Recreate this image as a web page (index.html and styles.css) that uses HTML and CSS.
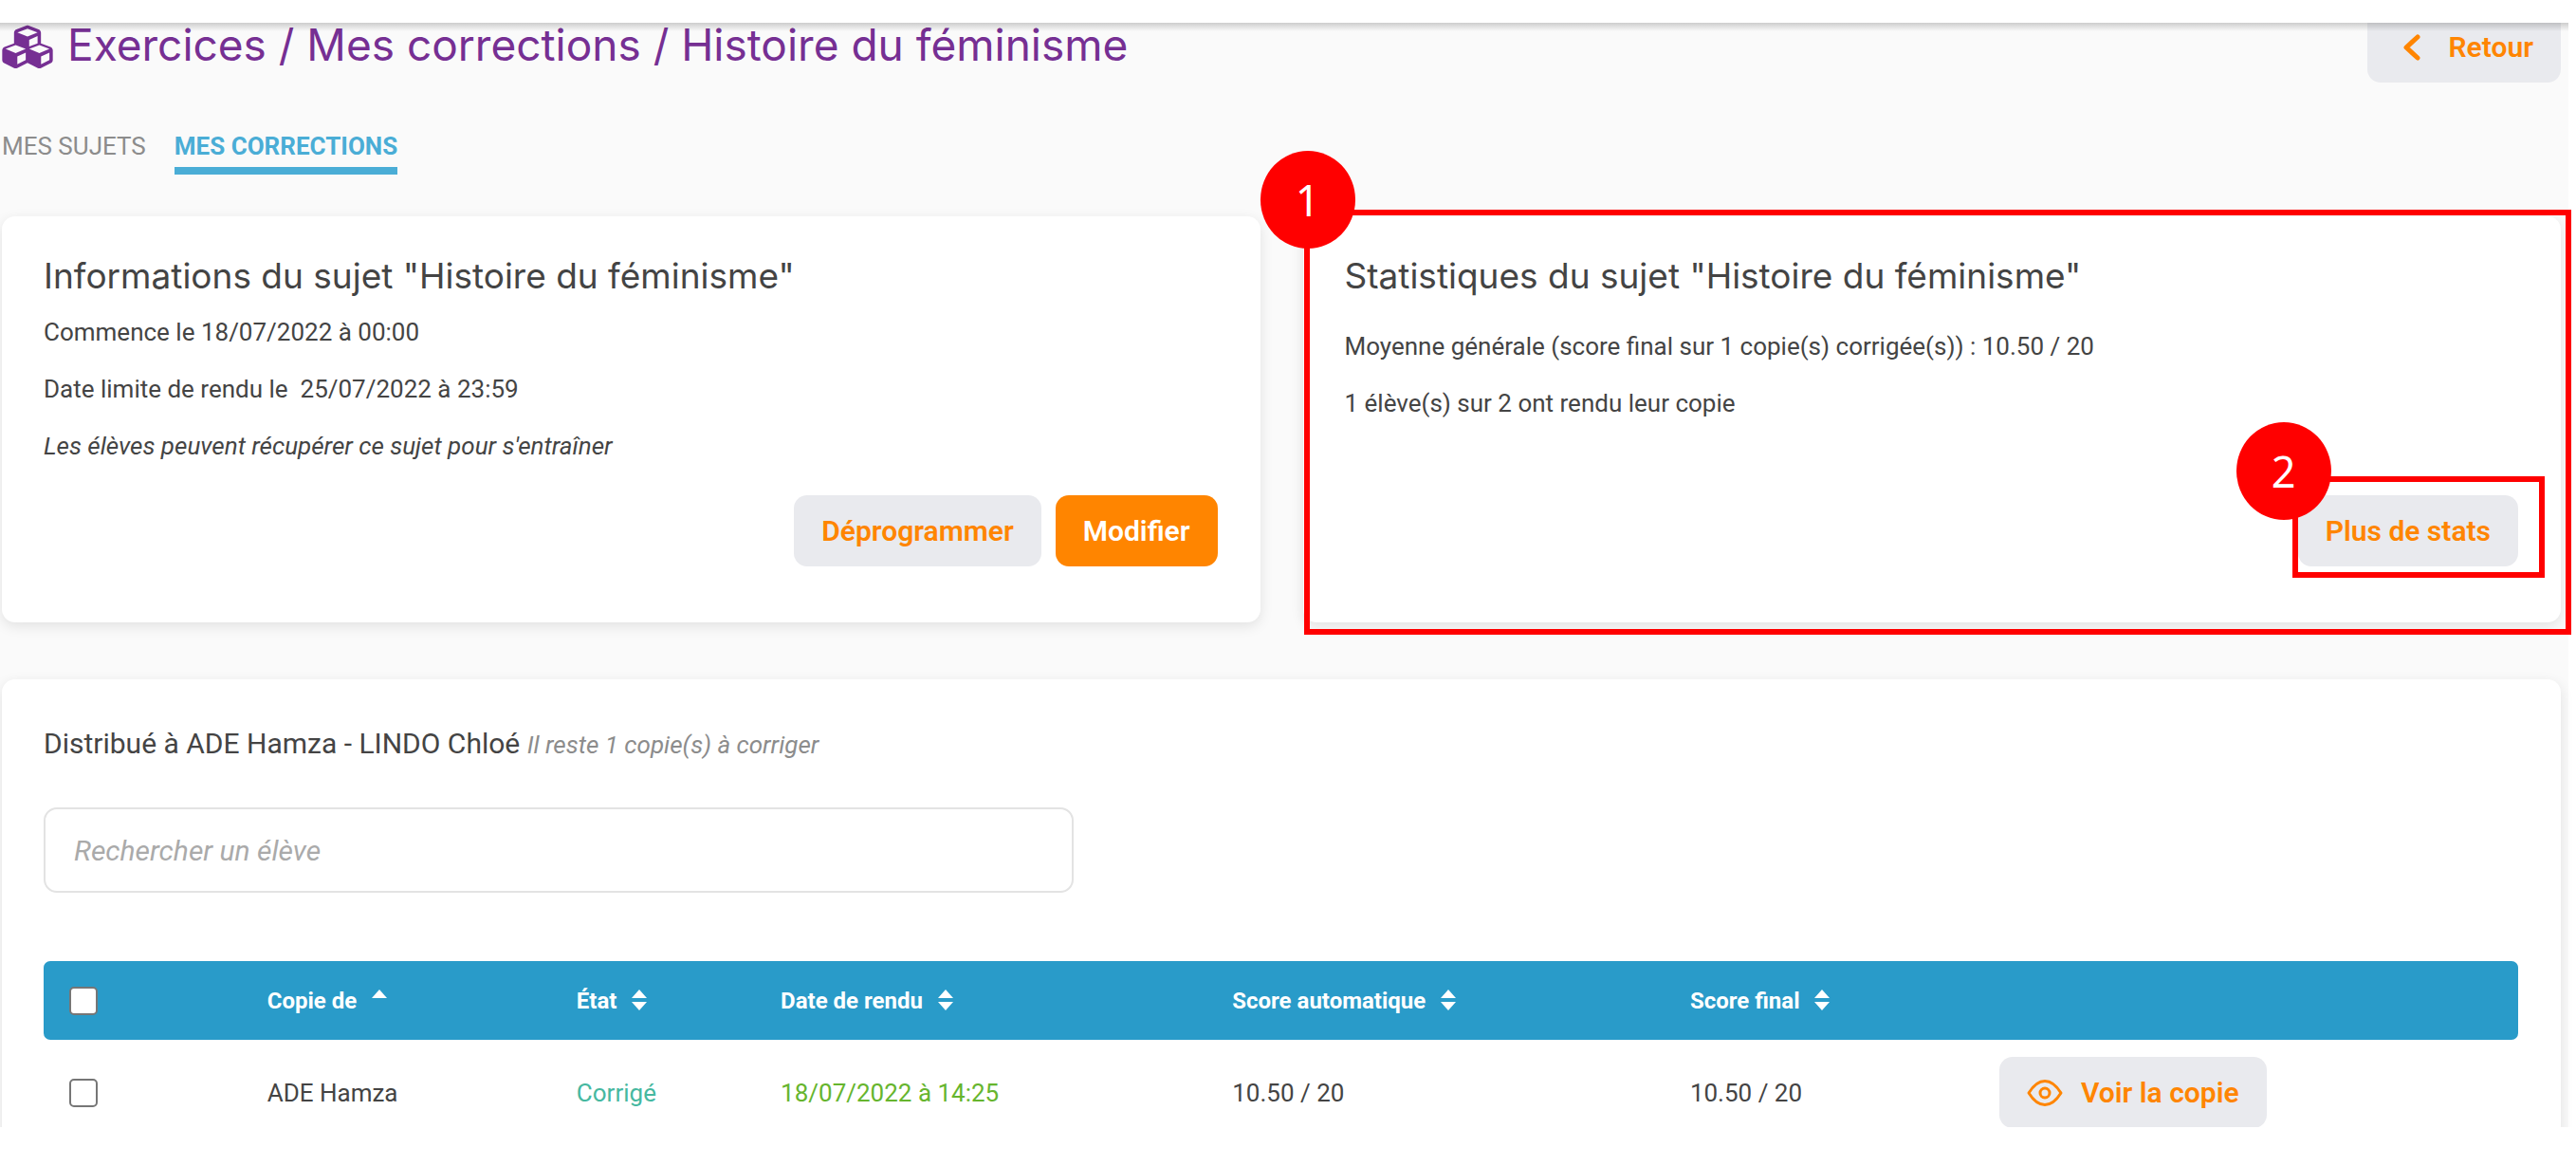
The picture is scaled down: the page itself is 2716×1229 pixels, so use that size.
FILE: index.html
```
<!DOCTYPE html>
<html lang="fr">
<head>
<meta charset="utf-8">
<meta name="viewport" content="width=device-width, initial-scale=1">
<title>Exercices - Mes corrections</title>
<link rel="stylesheet" href="styles.css">
</head>
<body>
<svg width="0" height="0" class="sprite" aria-hidden="true">
  <symbol id="sort-both" viewBox="0 0 16 22"><path d="M8 0L16 9H0zM0 13H16L8 22z" fill="currentColor"/></symbol>
  <symbol id="sort-up" viewBox="0 0 16 22"><path d="M8 0L16 9H0z" fill="currentColor"/></symbol>
</svg>
<header class="topbar"></header>
<div class="viewport">
  <main class="page">
    <div class="page-head">
      <svg class="cubes" viewBox="0 0 512 480" aria-hidden="true">
        <path fill="currentColor" d="M488.600 234.200L392 198V90.500c0-15-9.300-28.400-23.400-33.700l-100-37.500c-8.100-3.100-17.100-3.100-25.300 0l-100 37.500c-14.100 5.300-23.400 18.700-23.400 33.700V198l-96.600 36.200C9.300 239.500 0 252.900 0 267.900V366c0 13.600 7.700 26.100 19.900 32.200l100 50c10.100 5.100 22.100 5.100 32.200 0l103.900-52 103.900 52c10.100 5.100 22.100 5.100 32.200 0l100-50c12.200-6.100 19.900-18.600 19.900-32.200v-98.100c0-15-9.300-28.400-23.400-33.700zM358 198.800l-85 31.900v-68.200l85-37v73.300zM154 88.100l102-38.200 102 38.200v.6l-102 41.400-102-41.400v-.6zm84 279.100l-85 42.500v-79.100l85-38.800v75.400zm0-112l-102 41.400-102-41.400v-.6l102-38.200 102 38.200v.6zm240 112l-85 42.500v-79.100l85-38.800v75.400zm0-112l-102 41.400-102-41.400v-.6l102-38.200 102 38.200v.6z"/>
      </svg>
      <h1 class="page-title">Exercices / Mes corrections / Histoire du féminisme</h1>
      <button type="button" class="btn btn-back">
        <svg class="chevron" viewBox="0 0 18 28" aria-hidden="true"><path d="M15 3L3 14L15 25" fill="none" stroke="currentColor" stroke-width="5" stroke-linecap="round" stroke-linejoin="round"/></svg>
        Retour
      </button>
    </div>

    <nav class="tabs">
      <a href="#sujets" class="tab">MES SUJETS</a>
      <a href="#corrections" class="tab tab-active" aria-current="page">MES CORRECTIONS</a>
    </nav>

    <div class="cards">
      <section class="card">
        <h2 class="card-title">Informations du sujet "Histoire du féminisme"</h2>
        <p class="line">Commence le 18/07/2022 à 00:00</p>
        <p class="line">Date limite de rendu le &nbsp;25/07/2022 à 23:59</p>
        <p class="line"><em>Les élèves peuvent récupérer ce sujet pour s'entraîner</em></p>
        <div class="actions">
          <button type="button" class="btn">Déprogrammer</button>
          <button type="button" class="btn btn-primary">Modifier</button>
        </div>
      </section>
      <section class="card">
        <h2 class="card-title card-title-spaced">Statistiques du sujet "Histoire du féminisme"</h2>
        <p class="line">Moyenne générale (score final sur 1 copie(s) corrigée(s)) : 10.50 / 20</p>
        <p class="line">1 élève(s) sur 2 ont rendu leur copie</p>
        <div class="actions">
          <div class="target">
            <button type="button" class="btn">Plus de stats</button>
            <span class="frame frame-button"></span>
            <span class="step step-button">2</span>
          </div>
        </div>
        <span class="frame frame-card"></span>
        <span class="step step-card">1</span>
      </section>
    </div>

    <section class="card card-list">
      <p class="recipients">Distribué à ADE Hamza - LINDO Chloé <em class="remaining">Il reste 1 copie(s) à corriger</em></p>
      <input type="search" class="search" placeholder="Rechercher un élève" aria-label="Rechercher un élève">
      <table class="copies">
        <colgroup>
          <col class="col-check"><col class="col-name"><col class="col-state"><col class="col-date"><col class="col-auto"><col class="col-final"><col>
        </colgroup>
        <thead>
          <tr>
            <th><input type="checkbox" class="check" aria-label="Tout sélectionner"></th>
            <th>Copie de <svg class="sort"><use href="#sort-up"/></svg></th>
            <th>État <svg class="sort"><use href="#sort-both"/></svg></th>
            <th>Date de rendu <svg class="sort"><use href="#sort-both"/></svg></th>
            <th>Score automatique <svg class="sort"><use href="#sort-both"/></svg></th>
            <th>Score final <svg class="sort"><use href="#sort-both"/></svg></th>
            <th></th>
          </tr>
        </thead>
        <tbody>
          <tr>
            <td><input type="checkbox" class="check" aria-label="Sélectionner ADE Hamza"></td>
            <td>ADE Hamza</td>
            <td class="state">Corrigé</td>
            <td class="date">18/07/2022 à 14:25</td>
            <td>10.50 / 20</td>
            <td>10.50 / 20</td>
            <td>
              <button type="button" class="btn btn-view">
                <svg class="eye" viewBox="0 0 38 30" aria-hidden="true"><g fill="none" stroke="currentColor" stroke-width="3"><path d="M2 15C7 7 13 2.500 19 2.500S31 7 36 15C31 23 25 27.500 19 27.500S7 23 2 15z" stroke-linejoin="round"/><circle cx="19" cy="15" r="5"/></g></svg>
                Voir la copie
              </button>
            </td>
          </tr>
        </tbody>
      </table>
    </section>
  </main>
</div>
<footer class="bottombar"></footer>
</body>
</html>
```
FILE: styles.css
```
* { box-sizing: border-box; }

body {
  margin: 0;
  height: 100vh;
  display: flex;
  flex-direction: column;
  background: #fff;
  color: #444;
  font: 26px/30px Roboto, sans-serif;
  overflow: hidden;
}

.sprite { position: absolute; }

.topbar {
  flex: none;
  height: 24px;
  margin-right: 8px;
  position: relative;
  z-index: 1;
}

/* shade cast by the top bar over the scrolled content */
.topbar::after {
  content: "";
  position: absolute;
  top: 100%;
  left: 0;
  right: 0;
  height: 9px;
  background: linear-gradient(rgba(0, 0, 0, .18), rgba(0, 0, 0, 0));
}

.bottombar { flex: none; height: 41px; }

.viewport { flex: 1; min-height: 0; overflow: hidden; }

/* the content is scrolled slightly under the top bar */
.page {
  margin: -12px 8px 0 0;
  padding: 0 8px 0 2px;
  background: #fafafa;
}

.page-head {
  display: flex;
  align-items: center;
  height: 75px;
}

.cubes { width: 54px; height: 50px; color: #762f93; flex: none; }

.page-title {
  margin: 0 auto 0 15px;
  padding-bottom: 6px;
  color: #762f93;
  font: 400 46px/50px Inter, sans-serif;
  white-space: nowrap;
}

.btn {
  display: inline-flex;
  align-items: center;
  justify-content: center;
  height: 75px;
  padding: 0 29px;
  border: 0;
  border-radius: 14px;
  background: #e9eaee;
  color: #ff8500;
  font: 600 30px/36px Roboto, sans-serif;
  white-space: nowrap;
  cursor: pointer;
}

.btn-primary { background: #ff8500; color: #fff; }

.btn-back { gap: 30px; padding-left: 38px; }

.chevron { width: 18px; height: 28px; }

.tabs {
  display: flex;
  gap: 30px;
  margin-top: 37px;
}

.tab {
  padding: 15px 0 7px;
  border-bottom: 8px solid transparent;
  color: #8c8c8c;
  text-decoration: none;
}

.tab-active {
  border-color: #4aadd6;
  color: #4aadd6;
  font-weight: 700;
}

.cards {
  display: grid;
  grid-template-columns: 1fr 1fr;
  gap: 45px;
  margin: 44px 0 60px;
}

.card {
  position: relative;
  display: flex;
  flex-direction: column;
  padding: 42px 45px 59px 44px;
  border-radius: 14px;
  background: #fff;
  box-shadow: 0 4px 14px rgba(0, 0, 0, .1);
}

.card-title {
  margin: 0 0 23px;
  font: 400 37px/42px Inter, sans-serif;
}

.card-title-spaced { margin-bottom: 38px; }

.line { margin: 0 0 30px; }

.actions {
  display: flex;
  justify-content: flex-end;
  gap: 15px;
  margin-top: auto;
  padding-top: 7px;
}

.target { position: relative; }

/* numbered callouts drawn over the interface */
.frame {
  position: absolute;
  border: 6px solid #f00;
  pointer-events: none;
}

.frame-card { inset: -7px -11px -13px 1px; }
.frame-button { inset: -20px -28px -12px -6px; }

.step {
  position: absolute;
  display: flex;
  align-items: center;
  justify-content: center;
  width: 100px;
  height: 103px;
  border-radius: 50%;
  background: #f00;
  color: #fff;
  font: 400 45px/60px "Noto Sans", sans-serif;
}

.step-card { top: -69px; left: -45px; }
.step-button { top: -77px; left: -65px; }

.card-list { padding-bottom: 120px; }

.recipients { margin: 8px 0 0; font-size: 30px; line-height: 36px; }

.remaining { color: #8c8c8c; font-size: 26px; }

.search {
  width: 1086px;
  max-width: 100%;
  height: 90px;
  margin: 48px 0 72px;
  padding: 0 30px;
  border: 2px solid #e3e3e3;
  border-radius: 14px;
  background: #fff;
  font: 30px/36px Roboto, sans-serif;
}

.search::placeholder { color: #aaa; font-style: italic; opacity: 1; }

.copies {
  width: 100%;
  table-layout: fixed;
  border-collapse: separate;
  border-spacing: 0;
  text-align: left;
}

.col-check { width: 8%; }
.col-name { width: 12.5%; }
.col-state { width: 8.25%; }
.col-date { width: 18.25%; }
.col-auto { width: 18.5%; }
.col-final { width: 12.5%; }

.copies th {
  height: 83px;
  padding: 0 27px;
  background: #299bc9;
  color: #fff;
  font-size: 24px;
  font-weight: 700;
  white-space: nowrap;
}

.copies th:first-child { border-radius: 7px 0 0 7px; }
.copies th:last-child { border-radius: 0 7px 7px 0; }

.copies td { height: 111px; padding: 0 27px; white-space: nowrap; }

.state { color: #46b8a0; }
.date { color: #66b52e; }

.check {
  appearance: none;
  display: block;
  width: 30px;
  height: 30px;
  margin: 0;
  border: 2px solid #767676;
  border-radius: 5px;
  background: #fff;
}

.sort { width: 16px; height: 22px; margin-left: 10px; vertical-align: -2px; }

.btn-view { gap: 19px; }

.eye { width: 38px; height: 30px; }
```
